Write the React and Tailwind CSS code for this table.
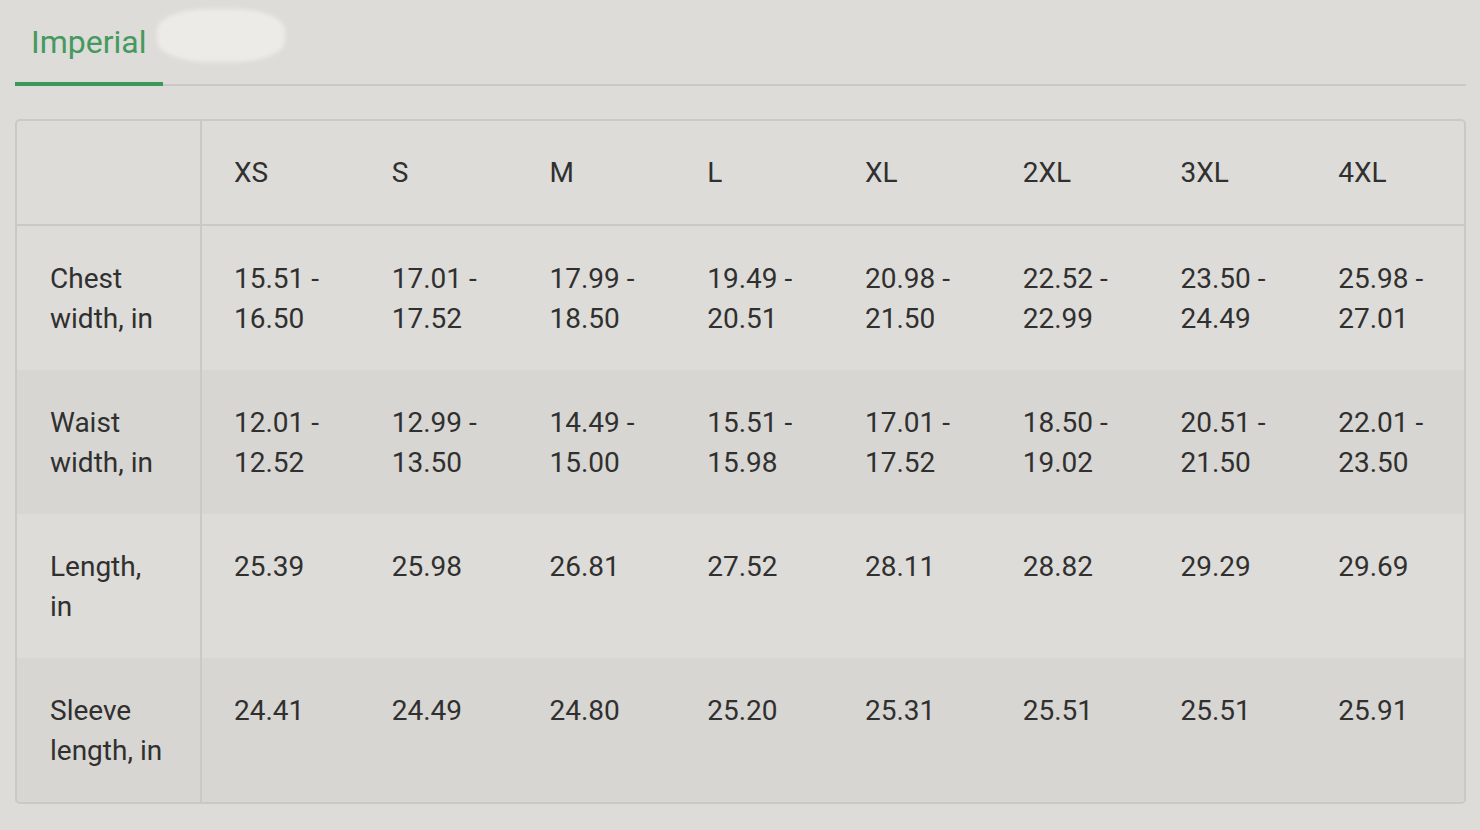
import React from "react";

const sizes = ["XS", "S", "M", "L", "XL", "2XL", "3XL", "4XL"];
const rows = [
  { label: "Chest width, in", vals: ["15.51 - 16.50", "17.01 - 17.52", "17.99 - 18.50", "19.49 - 20.51", "20.98 - 21.50", "22.52 - 22.99", "23.50 - 24.49", "25.98 - 27.01"] },
  { label: "Waist width, in", vals: ["12.01 - 12.52", "12.99 - 13.50", "14.49 - 15.00", "15.51 - 15.98", "17.01 - 17.52", "18.50 - 19.02", "20.51 - 21.50", "22.01 - 23.50"] },
  { label: "Length, in", vals: ["25.39", "25.98", "26.81", "27.52", "28.11", "28.82", "29.29", "29.69"] },
  { label: "Sleeve length, in", vals: ["24.41", "24.49", "24.80", "25.20", "25.31", "25.51", "25.51", "25.91"] },
];

export default function App() {
  return (
    <div
      className="w-[1480px] h-[830px] bg-[#dddcd8] pl-[15px] pr-[14px] overflow-hidden"
      style={{ fontFamily: "Roboto, 'Liberation Sans', sans-serif" }}
    >
      <div className="flex border-b-2 border-[#c9c8c4]">
        <div className="-mb-[2px] border-b-4 border-[#3a985a] px-[16px] pt-[22px] pb-[20px] text-[32px] leading-[40px] text-[#46995e]">
          Imperial
        </div>
        <div className="-ml-[6px] mt-[9px] h-[53px] w-[128px] rounded-[40%] bg-[#eeedea] blur-[2px] opacity-90" />
      </div>

      <div className="mt-[33px] border-2 border-[#cac9c5] rounded-[5px] overflow-hidden text-[28px] leading-[40px] text-[#303030]">
        <div className="grid grid-cols-[185px_repeat(8,1fr)] border-b-2 border-[#cac9c5]">
          <div className="border-r-2 border-[#cac9c5] pt-[32px] pb-[31px]" />
          {sizes.map((s) => (
            <div key={s} className="pl-[32px] pt-[32px] pb-[31px]">
              {s}
            </div>
          ))}
        </div>
        {rows.map((r, i) => (
          <div
            key={r.label}
            className={
              "grid grid-cols-[185px_repeat(8,1fr)] " +
              (i % 2 === 1 ? "bg-[#d7d6d2]" : "bg-[#dddcd8]")
            }
          >
            <div className="border-r-2 border-[#cac9c5] pl-[33px] pr-[33px] pt-[33px] pb-[31px]">{r.label}</div>
            {r.vals.map((v, j) => (
              <div key={j} className="pl-[32px] pr-[20px] pt-[33px] pb-[31px]">
                {v}
              </div>
            ))}
          </div>
        ))}
      </div>
    </div>
  );
}
